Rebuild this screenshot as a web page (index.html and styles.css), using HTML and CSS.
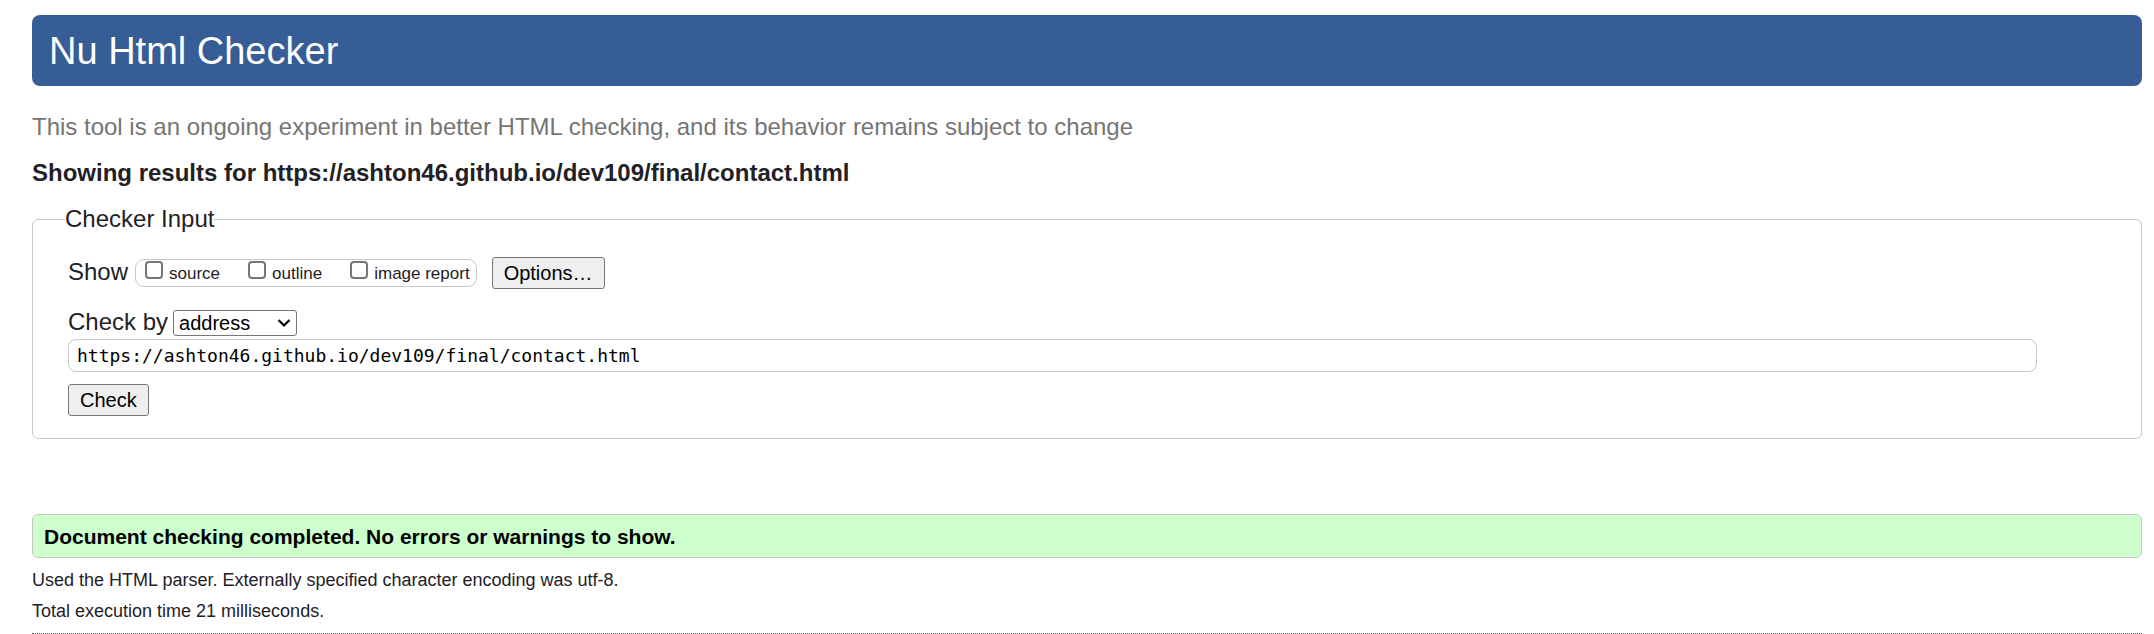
FILE: index.html
```html
<!DOCTYPE html>
<html lang="en">
<head>
<meta charset="utf-8">
<title>Nu Html Checker</title>
<link rel="stylesheet" href="styles.css">
</head>
<body>
<header class="banner"><h1 class="banner-title">Nu Html Checker</h1></header>
<main>
<p class="tagline">This tool is an ongoing experiment in better HTML checking, and its behavior remains subject to change</p>
<h2 class="showing">Showing results for https://ashton46.github.io/dev109/final/contact.html</h2>
<form>
<fieldset class="checker">
<legend class="checker-legend">Checker Input</legend>
<div class="row show-row">
<span class="row-label">Show</span>
<div class="extras">
<label class="extra" for="source"><input class="tick" type="checkbox" id="source"><span>source</span></label>
<label class="extra" for="outline"><input class="tick" type="checkbox" id="outline"><span>outline</span></label>
<label class="extra" for="image-report"><input class="tick" type="checkbox" id="image-report"><span>image report</span></label>
</div>
<button class="btn" type="button">Options…</button>
</div>
<div class="row method-row">
<label class="row-label" for="method">Check by</label>
<div class="select-wrap">
<select class="method" id="method"><option>address</option><option>file upload</option><option>text input</option></select>
<svg class="chevron" viewBox="0 0 14 10" aria-hidden="true"><path d="M1.5 2 L7 7.5 L12.5 2" fill="none" stroke="currentColor" stroke-width="2.2"/></svg>
</div>
</div>
<input class="address" type="url" aria-label="Address" value="https://ashton46.github.io/dev109/final/contact.html">
<button class="btn" type="submit">Check</button>
</fieldset>
</form>
<section class="results">
<p class="success">Document checking completed. No errors or warnings to show.</p>
<p class="detail">Used the HTML parser. Externally specified character encoding was utf-8.</p>
<p class="detail">Total execution time 21 milliseconds.</p>
</section>
</main>
<hr class="divider">
</body>
</html>
```
FILE: styles.css
```css
* { box-sizing: border-box; }
body {
  margin: 0;
  padding: 15px 12px 0 32px;
  background: #fff;
  color: #1f2126;
  font: 24px/28px "Liberation Sans", Arial, sans-serif;
}
h1, h2, p { margin: 0; }
.banner {
  padding: 14px 17px 13px;
  border-radius: 8px;
  background: #365d95;
  color: #fff;
}
.banner-title { font-size: 38px; line-height: 44px; font-weight: 400; }
.tagline { margin-top: 27px; color: #757575; }
.showing { margin: 18px 0; font-size: 24px; line-height: 28px; font-weight: 700; }
.checker {
  margin: 0;
  padding: 24px 104px 22px 35px;
  border: 1px solid #c8c8c8;
  border-radius: 6px;
}
.checker-legend { margin-left: -3px; padding: 0; }
.row { display: flex; align-items: center; }
.row-label { padding-bottom: 2px; line-height: 26px; }
.extras {
  display: flex;
  align-items: flex-start;
  gap: 28px;
  height: 28px;
  margin: 0 15px 0 7px;
  padding: 0 6px 0 9px;
  border: 1px solid #c8c8c8;
  border-radius: 9px;
  font-size: 17px;
  line-height: 20px;
}
.extra { display: flex; align-items: flex-start; gap: 6px; }
.extra span { padding-top: 4px; }
.tick {
  appearance: none;
  width: 18px;
  height: 18px;
  margin: 1px 0 0;
  border: 2px solid #767676;
  border-radius: 4px;
  background: #fff;
}
.tick:checked { background: #0075ff; }
.btn {
  display: block;
  height: 32px;
  padding: 0 11px 1px;
  border: 1px solid #767676;
  border-radius: 3px;
  background: #efefef;
  color: #000;
  font: 20px/24px "Liberation Sans", Arial, sans-serif;
}
.method-row { margin-top: 20px; gap: 5px; }
.select-wrap { display: grid; align-items: center; width: 124px; }
.method {
  grid-area: 1 / 1;
  width: 100%;
  height: 26px;
  padding: 0 5px;
  appearance: none;
  border: 1px solid #767676;
  border-radius: 3px;
  background: #fff;
  color: #000;
  font: 20px/24px "Liberation Sans", Arial, sans-serif;
}
.chevron {
  grid-area: 1 / 1;
  justify-self: end;
  width: 14px;
  height: 10px;
  margin-right: 6px;
  color: #000;
  pointer-events: none;
}
.address {
  display: block;
  width: 100%;
  height: 33px;
  margin: 2px 0 12px;
  padding: 0 8px;
  border: 1px solid #c8c8c8;
  border-radius: 8px;
  background: #fff;
  color: #000;
  font: 18px/24px "DejaVu Sans Mono", Consolas, monospace;
}
.results { margin-top: 75px; }
.success {
  margin-bottom: 7px;
  padding: 10px 11px 8px;
  border: 1px solid #c8c8c8;
  border-radius: 6px;
  background: #cfc;
  color: #000;
  font-size: 21px;
  line-height: 24px;
  font-weight: 700;
}
.detail { font-size: 18px; line-height: 31px; }
.divider { margin: 6px 0 0; border: 0; border-top: 1px dotted #555; }
```
